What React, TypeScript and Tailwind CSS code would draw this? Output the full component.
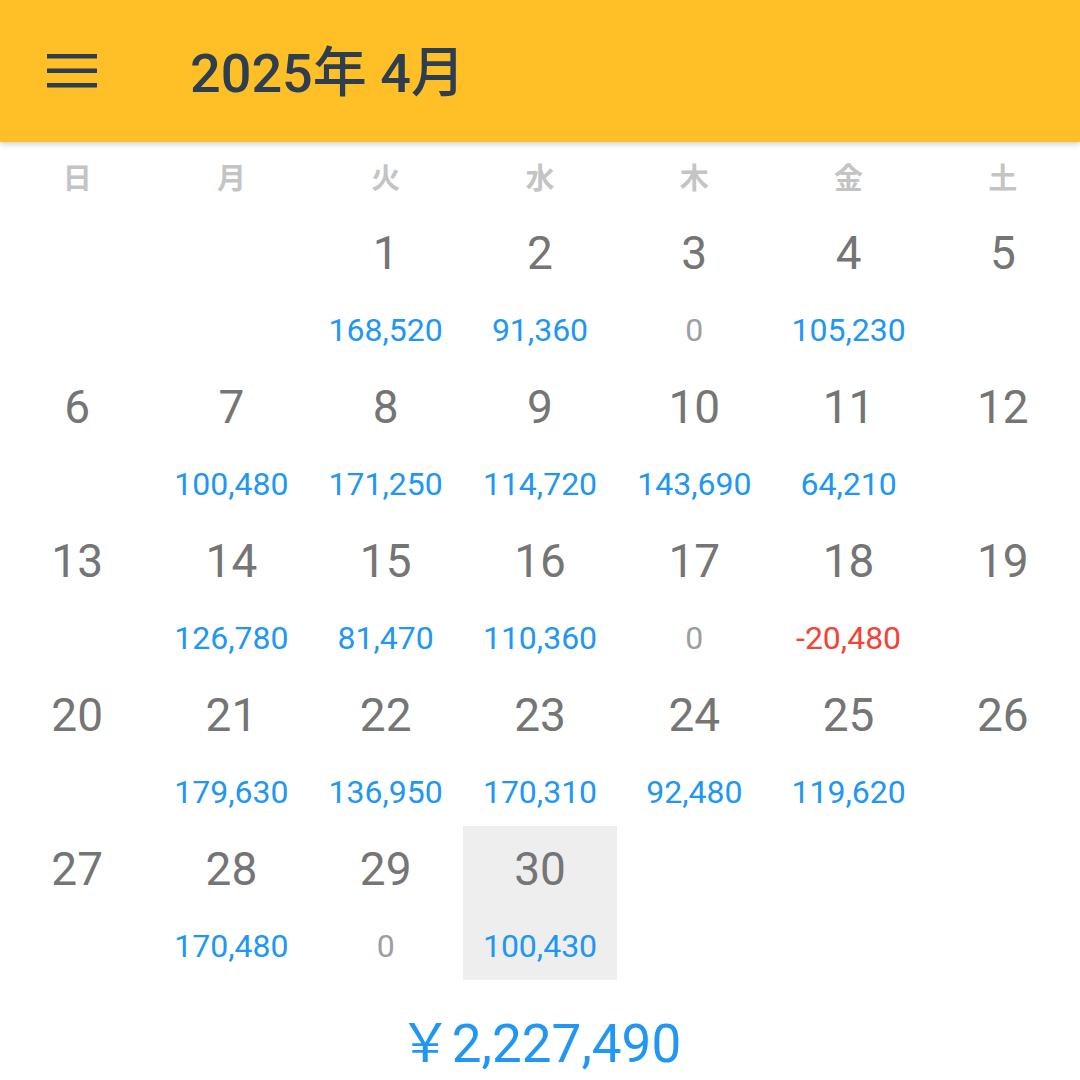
import React from 'react'

type Day = { d: number; amt?: number }

const weekdays = ['日', '月', '火', '水', '木', '金', '土']

const amounts: Record<number, number> = {
  1: 168520, 2: 91360, 3: 0, 4: 105230,
  7: 100480, 8: 171250, 9: 114720, 10: 143690, 11: 64210,
  14: 126780, 15: 81470, 16: 110360, 17: 0, 18: -20480,
  21: 179630, 22: 136950, 23: 170310, 24: 92480, 25: 119620,
  28: 170480, 29: 0, 30: 100430,
}

// April 2025 starts on Tuesday
const cells: (Day | null)[] = [null, null]
for (let d = 1; d <= 30; d++) cells.push({ d, amt: amounts[d] })

function Amount({ value }: { value?: number }) {
  if (value === undefined) return null
  const color = value === 0 ? 'text-[#9e9e9e]' : value < 0 ? 'text-[#f44336]' : 'text-[#2196f3]'
  return <span className={`text-[32px] leading-none ${color}`}>{value.toLocaleString('en-US')}</span>
}

export default function App() {
  const total = Object.values(amounts).reduce((a, b) => a + b, 0)

  return (
    <div className="w-[1080px] h-[1080px] bg-white overflow-hidden font-['Roboto','Noto_Sans_CJK_JP',sans-serif]">
      <header className="relative z-10 h-[142px] bg-[#ffbf27] flex items-center shadow-[0_2px_6px_rgba(0,0,0,0.2)]">
        <div className="w-[190px] pl-[47px] pt-[2px] flex items-center">
          <svg width="50" height="36" viewBox="0 0 50 36">
            <rect x="0" y="0" width="50" height="4.5" fill="#2d3e50" />
            <rect x="0" y="14.5" width="50" height="4.5" fill="#2d3e50" />
            <rect x="0" y="29" width="50" height="4.5" fill="#2d3e50" />
          </svg>
        </div>
        <h1 className="text-[54px] font-medium text-[#2d3e50] leading-none pt-[6px]">2025年 4月</h1>
      </header>

      <div className="grid grid-cols-7 h-[68px] pt-[8px]">
        {weekdays.map((w) => (
          <div key={w} className="flex items-center justify-center text-[29px] font-bold text-[#c4c4c4]">
            {w}
          </div>
        ))}
      </div>

      <div className="grid grid-cols-7">
        {cells.map((c, i) => (
          <div
            key={i}
            className={`h-[154px] flex flex-col items-center ${c?.d === 30 ? 'bg-[#eeeeee]' : ''}`}
          >
            {c && (
              <>
                <div className="h-[86px] flex items-center justify-center text-[46px] text-[#757575] leading-none">
                  {c.d}
                </div>
                <div className="h-[68px] flex items-center justify-center">
                  <Amount value={c.amt} />
                </div>
              </>
            )}
          </div>
        ))}
      </div>

      <div className="pt-[38px] flex justify-center">
        <span className="text-[53px] leading-none text-[#2196f3]">￥{total.toLocaleString('en-US')}</span>
      </div>
    </div>
  )
}
